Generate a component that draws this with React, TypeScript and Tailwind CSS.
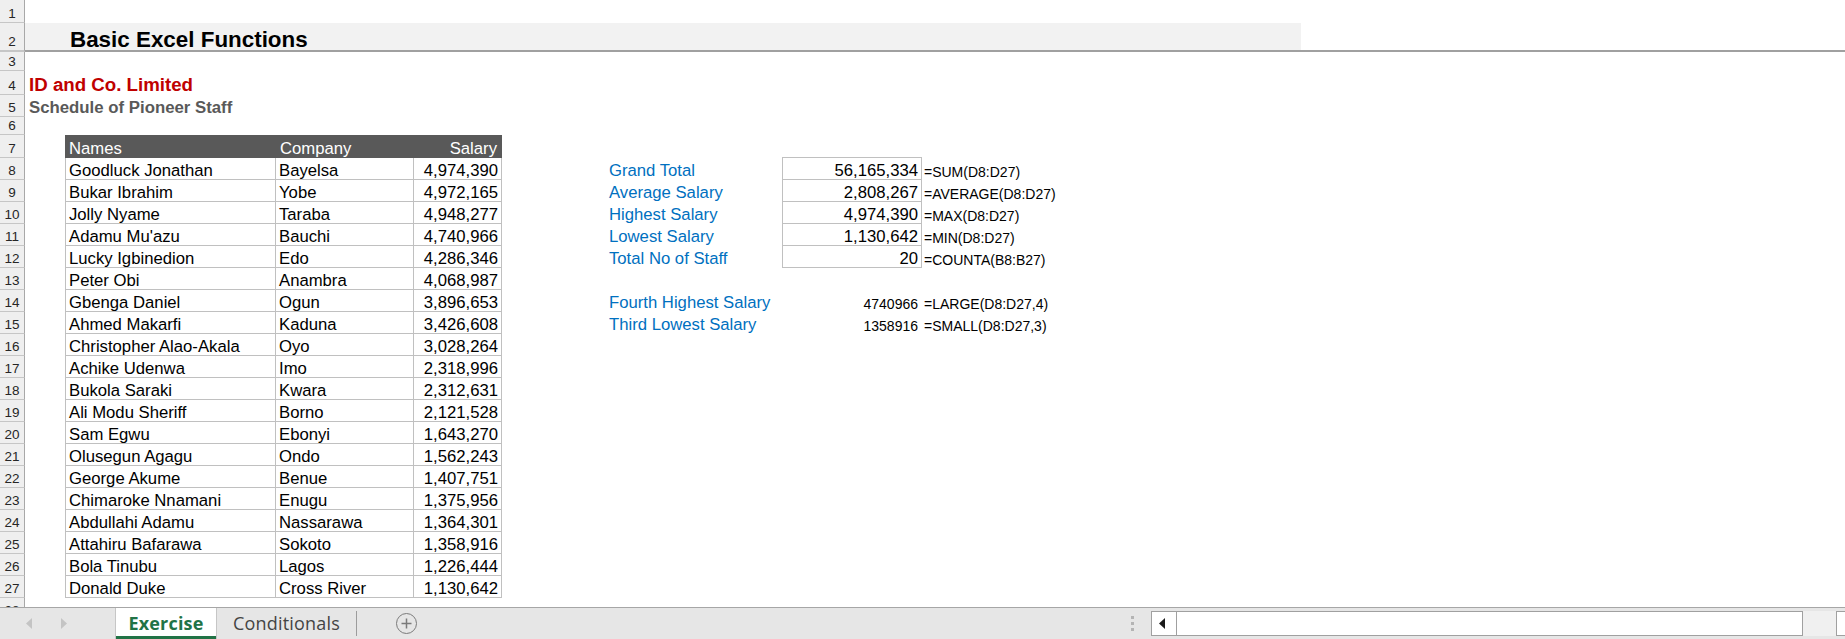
import React from "react";

type DataRow = [string, string, string];

const data: DataRow[] = [
  ["Goodluck Jonathan", "Bayelsa", "4,974,390"],
  ["Bukar Ibrahim", "Yobe", "4,972,165"],
  ["Jolly Nyame", "Taraba", "4,948,277"],
  ["Adamu Mu'azu", "Bauchi", "4,740,966"],
  ["Lucky Igbinedion", "Edo", "4,286,346"],
  ["Peter Obi", "Anambra", "4,068,987"],
  ["Gbenga Daniel", "Ogun", "3,896,653"],
  ["Ahmed Makarfi", "Kaduna", "3,426,608"],
  ["Christopher Alao-Akala", "Oyo", "3,028,264"],
  ["Achike Udenwa", "Imo", "2,318,996"],
  ["Bukola Saraki", "Kwara", "2,312,631"],
  ["Ali Modu Sheriff", "Borno", "2,121,528"],
  ["Sam Egwu", "Ebonyi", "1,643,270"],
  ["Olusegun Agagu", "Ondo", "1,562,243"],
  ["George Akume", "Benue", "1,407,751"],
  ["Chimaroke Nnamani", "Enugu", "1,375,956"],
  ["Abdullahi Adamu", "Nassarawa", "1,364,301"],
  ["Attahiru Bafarawa", "Sokoto", "1,358,916"],
  ["Bola Tinubu", "Lagos", "1,226,444"],
  ["Donald Duke", "Cross River", "1,130,642"],
];

type Summary = { label: string; value: string; formula: string; boxed: boolean };

const summary: Record<number, Summary> = {
  0: { label: "Grand Total", value: "56,165,334", formula: "=SUM(D8:D27)", boxed: true },
  1: { label: "Average Salary", value: "2,808,267", formula: "=AVERAGE(D8:D27)", boxed: true },
  2: { label: "Highest Salary", value: "4,974,390", formula: "=MAX(D8:D27)", boxed: true },
  3: { label: "Lowest Salary", value: "1,130,642", formula: "=MIN(D8:D27)", boxed: true },
  4: { label: "Total No of Staff", value: "20", formula: "=COUNTA(B8:B27)", boxed: true },
  6: { label: "Fourth Highest Salary", value: "4740966", formula: "=LARGE(D8:D27,4)", boxed: false },
  7: { label: "Third Lowest Salary", value: "1358916", formula: "=SMALL(D8:D27,3)", boxed: false },
};

function RowHead({ n, thick }: { n: number; thick?: boolean }) {
  return (
    <div
      className={
        "w-[25px] shrink-0 bg-[#efefef] border-r border-r-[#a8a8a8] border-b-[#c6c6c6] flex items-end justify-center pb-[2px] text-[13.5px] leading-[1] text-[#262626] " +
        (thick ? "border-b-2" : "border-b")
      }
    >
      {n}
    </div>
  );
}

function Row({ n, h, thick, children }: { n: number; h: string; thick?: boolean; children?: React.ReactNode }) {
  return (
    <div className={"flex shrink-0 " + h}>
      <RowHead n={n} thick={thick} />
      <div className="flex flex-1 min-w-0">{children}</div>
    </div>
  );
}

function DataLine({ row, idx }: { row: DataRow; idx: number }) {
  const s = summary[idx];
  return (
    <Row n={idx + 8} h="h-[22px]">
      <div className="w-[40px] shrink-0" />
      <div className="w-[211px] shrink-0 border-l border-r border-b border-[#c0c0c0] flex items-end pl-[3px] leading-[0.95] whitespace-nowrap text-black">
        {row[0]}
      </div>
      <div className="w-[138px] shrink-0 border-r border-b border-[#c0c0c0] flex items-end pl-[3px] leading-[0.95] whitespace-nowrap text-black">
        {row[1]}
      </div>
      <div className="w-[88px] shrink-0 border-r border-b border-[#c0c0c0] flex items-end justify-end pr-[3px] leading-[0.95] whitespace-nowrap text-black">
        {row[2]}
      </div>
      <div className="w-[103px] shrink-0" />
      {s ? (
        <>
          <div className="w-[177px] shrink-0 border-b border-transparent flex items-end pl-[4px] leading-[0.95] whitespace-nowrap text-[#0070c0]">
            {s.label}
          </div>
          {s.boxed ? (
            <div className="w-[140px] shrink-0 border-l border-r border-b border-[#c0c0c0] flex items-end justify-end pr-[3px] leading-[0.95] whitespace-nowrap text-black">
              {s.value}
            </div>
          ) : (
            <div className="w-[140px] shrink-0 border-b border-transparent flex items-end justify-end pr-[4px] leading-[0.95] whitespace-nowrap text-[14px] text-black">
              {s.value}
            </div>
          )}
          <div className="flex-1 border-b border-transparent flex items-end pl-[2px] leading-[0.95] whitespace-nowrap text-[14px] text-black">
            {s.formula}
          </div>
        </>
      ) : null}
    </Row>
  );
}

function TriLeft({ color }: { color: string }) {
  return (
    <svg width="6" height="11" viewBox="0 0 6 11">
      <path d="M6 0 L0 5.5 L6 11 Z" fill={color} />
    </svg>
  );
}

function TriRight({ color }: { color: string }) {
  return (
    <svg width="6" height="11" viewBox="0 0 6 11">
      <path d="M0 0 L6 5.5 L0 11 Z" fill={color} />
    </svg>
  );
}

export default function App() {
  return (
    <div className="w-[1845px] h-[639px] bg-white flex flex-col overflow-hidden font-['Liberation_Sans',Arial,sans-serif] text-[16.7px]">
      {/* Sheet */}
      <div className="h-[607px] shrink-0 overflow-hidden flex flex-col">
        <Row n={1} h="h-[23px]" />
        <Row n={2} h="h-[29px]" thick>
          <div className="flex-1 border-b-2 border-[#a0a0a0] flex">
            <div className="w-[1276px] shrink-0 bg-[#f2f2f2] flex items-end pl-[45px] leading-[0.95] text-[22.4px] font-bold text-black whitespace-nowrap">
              Basic Excel Functions
            </div>
          </div>
        </Row>
        <Row n={3} h="h-[19px]" />
        <Row n={4} h="h-[24px]">
          <div className="flex-1 border-b border-transparent flex items-end pl-[4px] leading-[0.95] text-[18.7px] font-bold text-[#c00000] whitespace-nowrap">
            ID and Co. Limited
          </div>
        </Row>
        <Row n={5} h="h-[22px]">
          <div className="flex-1 border-b border-transparent flex items-end pl-[4px] leading-[0.95] text-[16.8px] font-bold text-[#595959] whitespace-nowrap">
            Schedule of Pioneer Staff
          </div>
        </Row>
        <Row n={6} h="h-[18px]" />
        <Row n={7} h="h-[23px]">
          <div className="w-[40px] shrink-0" />
          <div className="w-[437px] shrink-0 bg-[#595959] flex text-white">
            <div className="w-[211px] shrink-0 border-b border-[#595959] flex items-end pl-[4px] leading-[0.95]">Names</div>
            <div className="w-[138px] shrink-0 border-b border-[#595959] flex items-end pl-[4px] leading-[0.95]">Company</div>
            <div className="w-[88px] shrink-0 border-b border-[#595959] flex items-end justify-end pr-[5px] leading-[0.95]">Salary</div>
          </div>
          <div className="w-[103px] shrink-0" />
          <div className="w-[177px] shrink-0" />
          <div className="w-[140px] shrink-0 border-b border-[#c0c0c0]" />
        </Row>
        {data.map((r, i) => (
          <DataLine key={i} row={r} idx={i} />
        ))}
        <Row n={28} h="h-[22px]" />
      </div>

      {/* Tab bar */}
      <div className="h-[32px] shrink-0 bg-[#e6e6e6] border-t border-[#a6a6a6] flex font-['Open_Sans',sans-serif]">
        <div className="w-[115px] shrink-0 flex items-center pl-[26px] gap-[29px]">
          <TriLeft color="#c4c4c4" />
          <TriRight color="#c4c4c4" />
        </div>
        <div className="w-[102px] shrink-0 bg-white border-l border-r border-[#c6c6c6] relative flex items-center justify-center">
          <span className="text-[18px] font-bold text-[#217346] tracking-[0.2px] leading-none pb-[2px]">Exercise</span>
          <div className="absolute left-0 right-0 bottom-0 h-[3px] bg-[#217346]" />
        </div>
        <div className="w-[139px] shrink-0 flex items-center justify-center">
          <span className="text-[18px] text-[#444444] tracking-[0.2px] leading-none pb-[2px]">Conditionals</span>
        </div>
        <div className="w-[1px] h-[25px] self-center bg-[#9c9c9c] shrink-0" />
        <div className="ml-[39px] self-center w-[21px] h-[21px] rounded-full border-[1.5px] border-[#7a7a7a] flex items-center justify-center shrink-0">
          <svg width="11" height="11" viewBox="0 0 11 11">
            <path d="M5.5 0.5 V10.5 M0.5 5.5 H10.5" stroke="#7a7a7a" strokeWidth="1.5" />
          </svg>
        </div>
        <div className="flex-1" />
        <div className="w-[38px] shrink-0 flex flex-col items-start pl-[18px] pt-[8px] gap-[3px]">
          <div className="w-[3px] h-[3px] bg-[#b4b4b4]" />
          <div className="w-[3px] h-[3px] bg-[#b4b4b4]" />
          <div className="w-[3px] h-[3px] bg-[#b4b4b4]" />
        </div>
        <div className="w-[694px] shrink-0 mt-[3px] h-[25px] flex">
          <div className="w-[26px] shrink-0 bg-white border border-[#a0a0a0] flex items-center pl-[7px]">
            <TriLeft color="#1a1a1a" />
          </div>
          <div className="w-[626px] shrink-0 bg-white border-t border-b border-r border-[#a0a0a0]" />
          <div className="w-[33px] shrink-0 bg-[#f0f0f0]" />
          <div className="flex-1 bg-white border-l border-t border-b border-[#a0a0a0]" />
        </div>
      </div>
    </div>
  );
}
